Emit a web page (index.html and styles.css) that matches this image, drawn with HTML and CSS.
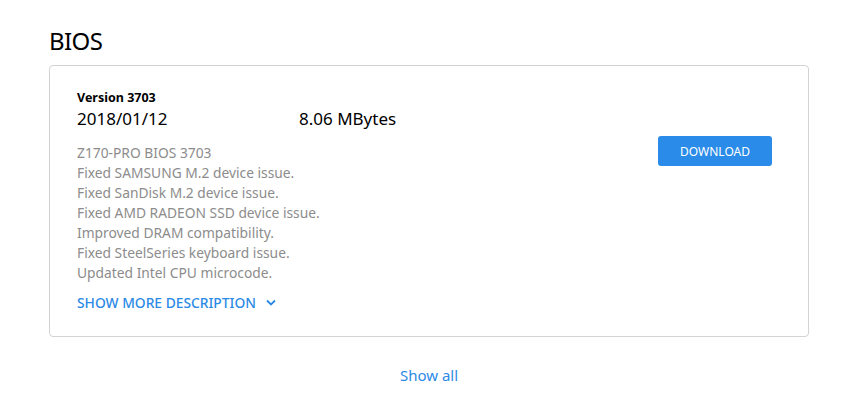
FILE: index.html
```html
<!DOCTYPE html>
<html lang="en">

<head>
     <meta charset="UTF-8">
     <meta name="viewport" content="width=device-width, initial-scale=1.0">
     <title>BIOS</title>
     <link rel="stylesheet" href="styles.css">
</head>

<body>
     <section class="downloads">
          <h2 class="section-title">BIOS</h2>

          <div class="file-card">
               <div class="file-info">
                    <p class="version">Version 3703</p>
                    <div class="meta">
                         <span class="date">2018/01/12</span>
                         <span class="size">8.06 MBytes</span>
                    </div>
                    <div class="desc">
                         <p>Z170-PRO BIOS 3703</p>
                         <p>Fixed SAMSUNG M.2 device issue.</p>
                         <p>Fixed SanDisk M.2 device issue.</p>
                         <p>Fixed AMD RADEON SSD device issue.</p>
                         <p>Improved DRAM compatibility.</p>
                         <p>Fixed SteelSeries keyboard issue.</p>
                         <p>Updated Intel CPU microcode.</p>
                    </div>
                    <a class="more" href="#">SHOW MORE DESCRIPTION
                         <svg width="10" height="7" viewBox="0 0 10 7">
                              <path d="M1 1.5 L5 5.5 L9 1.5" fill="none" stroke="currentColor" stroke-width="1.8" />
                         </svg>
                    </a>
               </div>
               <div class="file-action">
                    <button class="btn-download">DOWNLOAD</button>
               </div>
          </div>

          <div class="show-all">
               <a href="#">Show all</a>
          </div>
     </section>
</body>

</html>
```

FILE: styles.css
```css
/* Base styles */
body {
     margin: 0;
     background: #ffffff;
     color: #000000;
     font-family: "Noto Sans", "Open Sans", sans-serif;
}

.downloads {
     width: 760px;
     margin-left: 49px;
     padding-top: 26px;
}

.section-title {
     margin: 0 0 9px 0;
     font-size: 24px;
     font-weight: 400;
     letter-spacing: -0.6px;
     line-height: 30px;
}

/* Card */
.file-card {
     display: flex;
     justify-content: space-between;
     border: 1px solid #d3d3d3;
     border-radius: 4px;
     padding: 22px 36px 23px 27px;
}

.version {
     margin: 0;
     font-size: 12.5px;
     font-weight: 700;
     line-height: 19px;
}

.meta {
     display: flex;
     font-size: 17px;
     line-height: 24px;
     margin-bottom: 12px;
}

.meta .date {
     width: 222px;
}

.desc p {
     margin: 0;
     font-size: 13.8px;
     line-height: 20px;
     color: #8c8c8c;
}

.more {
     display: inline-flex;
     align-items: center;
     gap: 10px;
     margin-top: 10px;
     font-size: 13.8px;
     font-weight: 500;
     color: #2b8ae6;
     text-decoration: none;
}

.file-action {
     padding-top: 48px;
}

.btn-download {
     width: 114px;
     height: 30px;
     border: none;
     border-radius: 3px;
     background: #2a8ce8;
     color: #ffffff;
     font-family: inherit;
     font-size: 12px;
}

.show-all {
     text-align: center;
     margin-top: 27px;
}

.show-all a {
     color: #2b8ae6;
     font-size: 15px;
     text-decoration: none;
}
```
